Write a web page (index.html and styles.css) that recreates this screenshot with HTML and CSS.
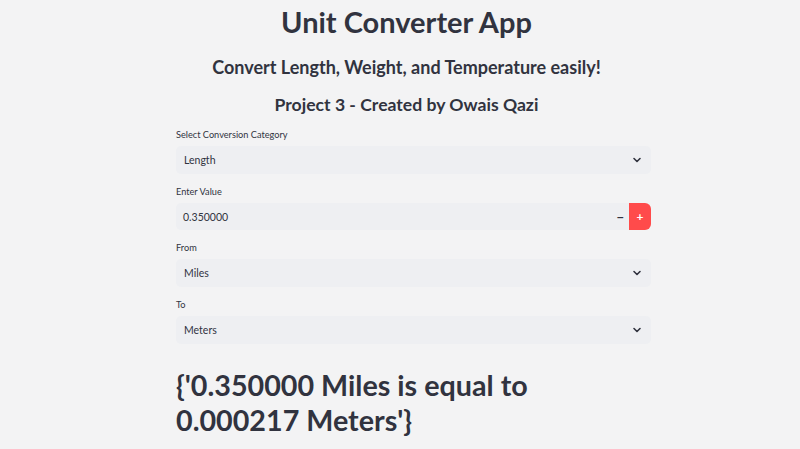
FILE: index.html
```html
<!DOCTYPE html>
<html>
<head>
<meta charset="utf-8">
<link rel="stylesheet" href="styles.css">
</head>
<body>
<main class="app">
  <h1 class="title">Unit Converter App</h1>
  <h3 class="subtitle">Convert Length, Weight, and Temperature easily!</h3>
  <h3 class="credit">Project 3 - Created by Owais Qazi</h3>

  <div class="field">
    <label class="label">Select Conversion Category</label>
    <div class="select"><span>Length</span>
      <svg class="chev" viewBox="0 0 10 10" width="10" height="10"><path d="M2 3.5 L5 6.5 L8 3.5" fill="none" stroke="#31333f" stroke-width="1.6" stroke-linecap="round" stroke-linejoin="round"/></svg>
    </div>
  </div>

  <div class="field">
    <label class="label">Enter Value</label>
    <div class="number">
      <div class="num-input"><span>0.350000</span><span class="minus">&minus;</span></div>
      <div class="plus">+</div>
    </div>
  </div>

  <div class="field">
    <label class="label">From</label>
    <div class="select"><span>Miles</span>
      <svg class="chev" viewBox="0 0 10 10" width="10" height="10"><path d="M2 3.5 L5 6.5 L8 3.5" fill="none" stroke="#31333f" stroke-width="1.6" stroke-linecap="round" stroke-linejoin="round"/></svg>
    </div>
  </div>

  <div class="field">
    <label class="label">To</label>
    <div class="select"><span>Meters</span>
      <svg class="chev" viewBox="0 0 10 10" width="10" height="10"><path d="M2 3.5 L5 6.5 L8 3.5" fill="none" stroke="#31333f" stroke-width="1.6" stroke-linecap="round" stroke-linejoin="round"/></svg>
    </div>
  </div>

  <h2 class="result">{'0.350000 Miles is equal to 0.000217 Meters'}</h2>
</main>
</body>
</html>
```

FILE: styles.css
```css
html, body {
  margin: 0;
  padding: 0;
  background: #f3f3f4;
}
body {
  font-family: "Lato", "Noto Sans", sans-serif;
  color: #31333f;
}
.app {
  width: 475px;
  margin-left: 176px;
  display: flex;
  flex-direction: column;
}
.title {
  margin: 0;
  padding: 4px 14px 0 0;
  height: 38px;
  text-align: center;
  font-size: 29px;
  font-weight: 700;
  line-height: 36px;
}
.subtitle {
  margin: 0;
  padding: 12px 14px 0 0;
  text-align: center;
  font-size: 18px;
  font-weight: 700;
  line-height: 26px;
}
.credit {
  margin: 0;
  padding: 12px 14px 0 0;
  text-align: center;
  font-size: 17.6px;
  font-weight: 700;
  line-height: 26px;
}
.field {
  display: flex;
  flex-direction: column;
  margin-top: 9px;
}
.field + .field { margin-top: 10px; }
.label {
  font-size: 9.2px;
  line-height: 16px;
  height: 16px;
  margin-bottom: 3px;
}
.select {
  height: 28px;
  background: #eeeff2;
  border-radius: 5px;
  display: flex;
  align-items: center;
  justify-content: space-between;
  padding: 0 8px 0 8px;
  font-size: 10.5px;
}
.chev { margin-right: 1px; }
.number {
  display: flex;
  height: 27px;
}
.num-input {
  flex: 1;
  background: #eeeff2;
  border-radius: 5px 0 0 5px;
  display: flex;
  align-items: center;
  justify-content: space-between;
  padding: 0 5px 0 7px;
  font-size: 10.5px;
}
.minus {
  font-size: 13px;
  font-weight: 700;
}
.plus {
  width: 22px;
  background: #ff4b4b;
  color: #fff;
  border-radius: 0 6px 6px 0;
  display: flex;
  align-items: center;
  justify-content: center;
  font-size: 12px;
  font-weight: 700;
}
.result {
  margin: 0;
  padding-top: 24px;
  font-size: 28.7px;
  font-weight: 700;
  line-height: 35px;
  width: 380px;
}
```
